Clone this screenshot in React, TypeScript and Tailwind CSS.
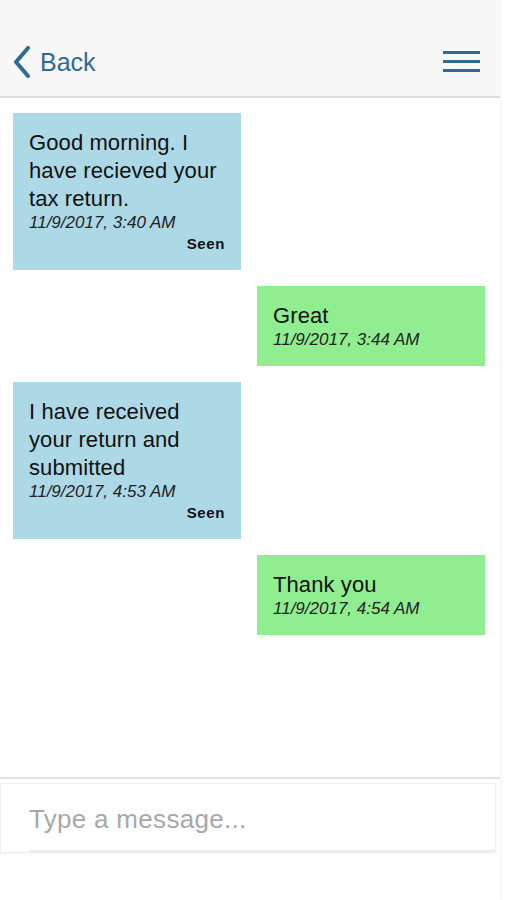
import React from 'react';

type Msg = { text: string; time: string; mine: boolean; seen?: boolean };

const messages: Msg[] = [
    { text: 'Good morning. I have recieved your tax return.', time: '11/9/2017, 3:40 AM', mine: false, seen: true },
    { text: 'Great', time: '11/9/2017, 3:44 AM', mine: true },
    { text: 'I have received your return and submitted', time: '11/9/2017, 4:53 AM', mine: false, seen: true },
    { text: 'Thank you', time: '11/9/2017, 4:54 AM', mine: true },
];

const Bubble: React.FC<{ msg: Msg }> = ({ msg }) => {
    return (
        <div className={`flex ${msg.mine ? 'justify-end pr-[15px]' : 'justify-start pl-[13px]'}`}>
            <div className={`w-[228px] px-4 pt-4 pb-4 ${msg.mine ? 'bg-[#90ee90]' : 'bg-[#add8e6]'}`}>
                <p className="text-[22px] leading-[28px] tracking-[0.1px] text-[#111]">{msg.text}</p>
                <p className="text-[17px] leading-[20px] italic text-[#222]">{msg.time}</p>
                {msg.seen && (
                    <p className="text-right text-[15px] leading-[20px] font-bold tracking-[0.6px] text-[#111] mt-[1px]">Seen</p>
                )}
            </div>
        </div>
    );
};

export default function App() {
    return (
        <div className="w-[506px] h-[900px] bg-white flex flex-col" style={{ fontFamily: '"Liberation Sans", Arial, sans-serif' }}>
            <div className="w-[500px] h-full flex flex-col shadow-[1px_0_3px_rgba(0,0,0,0.06)]">
                <header className="h-[98px] bg-[#f7f7f7] border-b-2 border-[#dcdcdc] flex items-end pb-[18px] px-[12px]">
                    <div className="flex items-center gap-[8px] text-[#2e6a94]">
                        <svg width="20" height="32" viewBox="0 0 20 32" fill="none">
                            <path d="M16 2 L4 16 L16 30" stroke="#2e6a94" strokeWidth="4" strokeLinecap="round" strokeLinejoin="round" />
                        </svg>
                        <span className="text-[25px] leading-none">Back</span>
                    </div>
                    <div className="ml-auto mr-[8px] mb-[6px] flex flex-col gap-[6px]">
                        <span className="block w-[37px] h-[3px] bg-[#2e6a94]" />
                        <span className="block w-[37px] h-[3px] bg-[#2e6a94]" />
                        <span className="block w-[37px] h-[3px] bg-[#2e6a94]" />
                    </div>
                </header>
                <main className="flex-1 flex flex-col gap-[16px] pt-[15px]">
                    {messages.map((m, i) => (
                        <Bubble key={i} msg={m} />
                    ))}
                </main>
                <div className="border-t-2 border-[#e2e2e2] pt-[4px] h-[123px]">
                    <div className="h-[70px] mr-[4px] bg-white border border-[#f0f0f0] shadow-[0_1px_3px_rgba(0,0,0,0.05)] flex flex-col">
                        <div className="flex-1 flex items-center pl-[28px] pt-[4px] text-[26px] tracking-[0.3px] text-[#a8a8a8]">Type a message...</div>
                        <div className="ml-[28px] h-[2px] bg-[#ececec]" />
                    </div>
                </div>
            </div>
        </div>
    );
}
